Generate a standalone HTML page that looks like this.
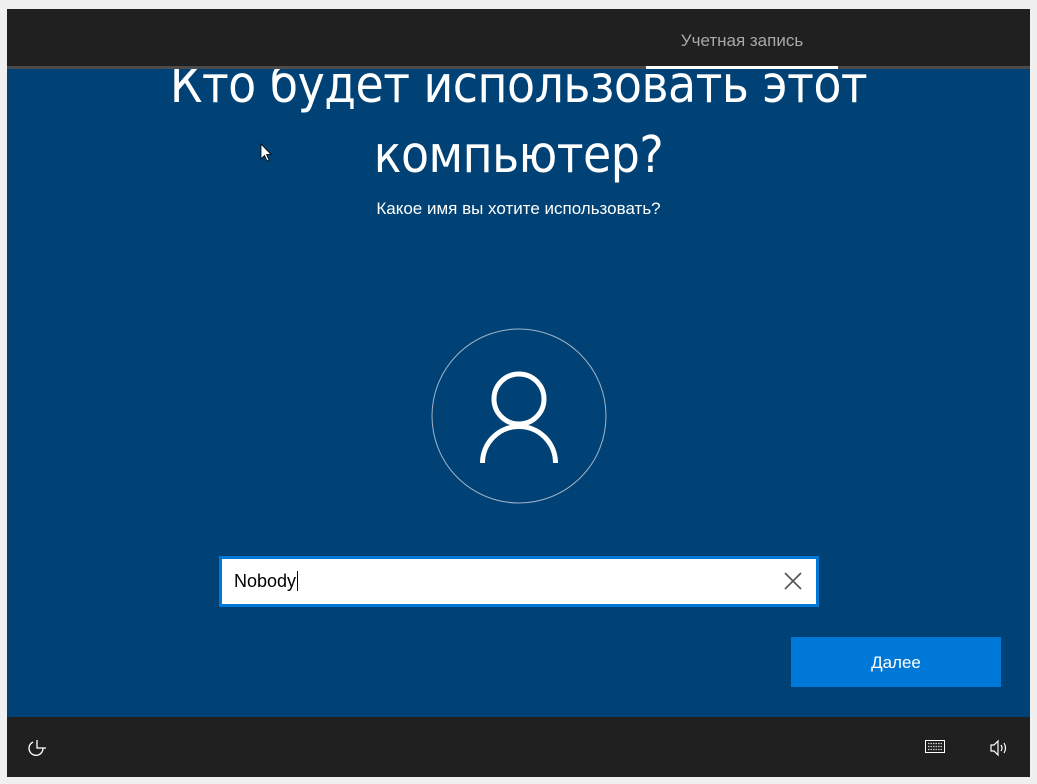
<!DOCTYPE html>
<html><head><meta charset="utf-8"><style>
body{margin:0;width:1037px;height:784px;background:#f0f0f0;position:relative;overflow:hidden;font-family:"Segoe UI","Liberation Sans","DejaVu Sans",sans-serif}
.top{position:absolute;left:7px;top:9px;width:1023px;height:57px;background:#202020}
.line{position:absolute;left:7px;top:66px;width:1023px;height:3px;background:#4b4b4b}
.ul{position:absolute;left:646px;top:66px;width:192px;height:3px;background:#fff}
.tab{position:absolute;left:646px;width:192px;top:31px;text-align:center;color:#a8a8a8;font-size:17px}
.blue{position:absolute;left:7px;top:69px;width:1023px;height:648px;background:#004275;overflow:hidden}
.bot{position:absolute;left:7px;top:717px;width:1023px;height:60px;background:#202020}
h1{position:absolute;left:0;width:1023px;top:-18px;margin:0;text-align:center;color:#fff;font-weight:300;font-size:51px;line-height:70px;font-family:"DejaVu Sans Condensed","Liberation Sans Narrow","Liberation Sans",sans-serif;font-stretch:condensed;letter-spacing:-0.5px}
.sub{position:absolute;left:0;width:1023px;top:130px;text-align:center;color:#fff;font-size:17px}
.input{position:absolute;left:219px;top:556px;width:594px;height:45px;border:3px solid #0078d7;background:#fff}
.input span{position:absolute;left:12px;top:12px;font-size:18px;color:#000}
.btn{position:absolute;left:791px;top:637px;width:210px;height:50px;background:#0078d7;color:#fff;font-size:17px;text-align:center;line-height:52px}
</style></head><body>
<div class="top"></div><div class="tab">Учетная запись</div>
<div class="line"></div><div class="ul"></div>
<div class="blue">
<h1>Кто будет использовать этот<br>компьютер?</h1>
<div class="sub">Какое имя вы хотите использовать?</div>
</div>
<svg style="position:absolute;left:0;top:0" width="1037" height="784">
<circle cx="519" cy="416" r="87" fill="none" stroke="#9fb4c8" stroke-width="1"/>
<circle cx="519" cy="399" r="25" fill="none" stroke="#fff" stroke-width="5"/>
<path d="M482.5 463 A36.5 36.5 0 0 1 555.5 463" fill="none" stroke="#fff" stroke-width="5"/>
<path d="M261 144V159L264.5 155.5L267 161L269 160L266.5 154.5H271Z" fill="#fff" stroke="#000" stroke-width="0.8"/>
</svg>
<div class="input"><span>Nobody<span style="position:static;border-left:1px solid #000;margin-left:1px"></span></span>
<svg style="position:absolute;right:14px;top:13px" width="18" height="18"><path d="M1 1L17 17M17 1L1 17" stroke="#555" stroke-width="1.6"/></svg></div>
<div class="btn">Далее</div>
<div class="bot"></div>
<svg style="position:absolute;left:26px;top:738px" width="24" height="20"><path d="M7 4A7 7 0 1 0 17 10" fill="none" stroke="#fff" stroke-width="1.3"/><path d="M11 2V10H20" fill="none" stroke="#fff" stroke-width="1.3"/></svg>
<svg style="position:absolute;left:925px;top:740px" width="20" height="14"><rect x="0.5" y="0.5" width="19" height="12" fill="none" stroke="#fff"/><path d="M3 3.5H17M3 6.5H17M3 9.5H17" stroke="#ccc" stroke-width="1.2" stroke-dasharray="1.5 1"/></svg>
<svg style="position:absolute;left:990px;top:739px" width="20" height="18"><path d="M1 6H4L8 2V16L4 12H1Z" fill="none" stroke="#fff" stroke-width="1.2"/><path d="M11 6Q13 9 11 12M14 4Q17 9 14 14" fill="none" stroke="#fff" stroke-width="1.2"/></svg>
</body></html>
